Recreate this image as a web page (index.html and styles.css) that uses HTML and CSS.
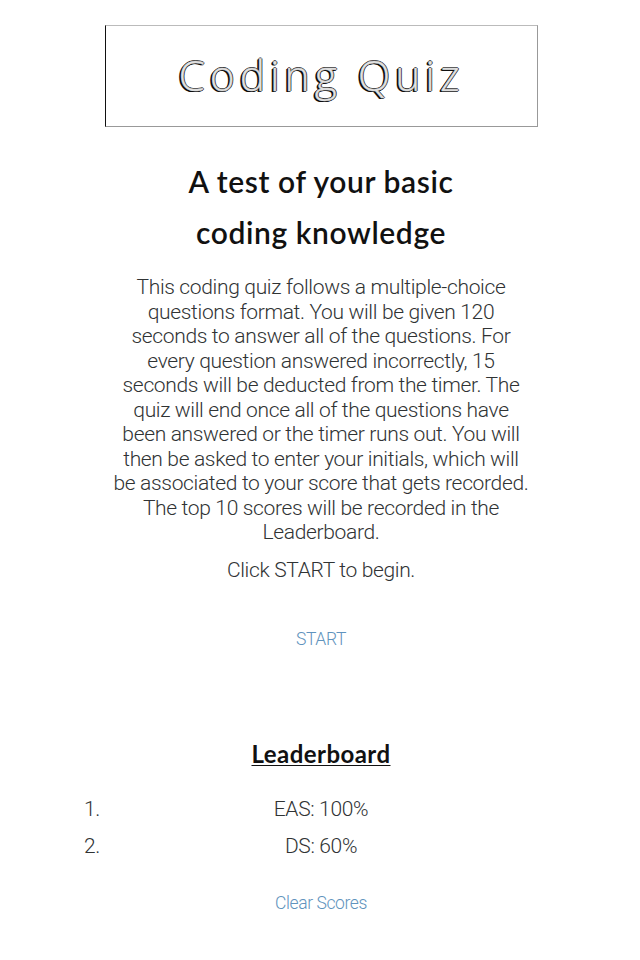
FILE: index.html
```html
<!DOCTYPE html>
<html lang="en">
<head>
<meta charset="utf-8">
<title>Coding Quiz</title>
<link rel="stylesheet" href="styles.css">
</head>
<body>
<header class="banner"><h1 class="title">Coding Quiz</h1></header>
<main>
<h2 class="subtitle">A test of your basic<br>coding knowledge</h2>
<p class="intro">This coding quiz follows a multiple-choice<br>questions format. You will be given 120<br>seconds to answer all of the questions. For<br>every question answered incorrectly, 15<br>seconds will be deducted from the timer. The<br>quiz will end once all of the questions have<br>been answered or the timer runs out. You will<br>then be asked to enter your initials, which will<br>be associated to your score that gets recorded.<br>The top 10 scores will be recorded in the<br>Leaderboard.</p>
<p class="prompt">Click START to begin.</p>
<button class="link start">START</button>
<section class="leaderboard">
<h3 class="board-title">Leaderboard</h3>
<ol class="scores">
<li><span>1.</span><span>EAS: 100%</span></li>
<li><span>2.</span><span>DS: 60%</span></li>
</ol>
<button class="link">Clear Scores</button>
</section>
</main>
</body>
</html>
```
FILE: styles.css
```css
* { box-sizing: border-box; margin: 0; padding: 0; }
body { background: #fff; color: #303334; font: 300 21px/24.55px Roboto, sans-serif; letter-spacing: -.34px; text-align: center; padding-top: 25px; }
.banner { width: 433px; height: 102px; margin: 0 auto 0 105px; border: 1px solid #999; border-top-color: #bbb; border-left-color: #111; display: flex; justify-content: center; padding-top: 21px; }
.title { font: 300 42.5px/56px "Open Sans", sans-serif; letter-spacing: 5px; color: #e4e4e4; -webkit-text-stroke: .5px #ccc; text-shadow: -1px 0 0 #000, 0 1px 0 #111, -1px 1px 0 #000, 1px 0 0 #222, 0 -1px 0 #333, -2px 1px 0 #222; }
main { display: flex; flex-direction: column; align-items: center; padding-left: 2px; }
.subtitle { margin-top: 29px; font: 600 30px/51px Lato, sans-serif; letter-spacing: .6px; color: #111; }
.intro { margin-top: 17px; }
.prompt { margin-top: 12.5px; }
.link { border: 0; background: none; color: #6093bd; font: 300 17.5px/24px Roboto, sans-serif; letter-spacing: -.4px; }
.start { margin-top: 45px; }
.leaderboard { width: 100%; margin-top: 88px; display: flex; flex-direction: column; align-items: center; }
.board-title { font: 700 24px/30px Lato, sans-serif; letter-spacing: .45px; color: #111; text-decoration: underline; text-decoration-thickness: 1px; text-underline-offset: 2px; text-decoration-skip-ink: none; }
.scores { list-style: none; width: 474px; margin: 28px 0 20px; }
.scores li { display: grid; grid-template-columns: 20px 1fr 20px; height: 37px; line-height: 25px; }
.scores li span:first-child { text-align: left; white-space: nowrap; }
```
